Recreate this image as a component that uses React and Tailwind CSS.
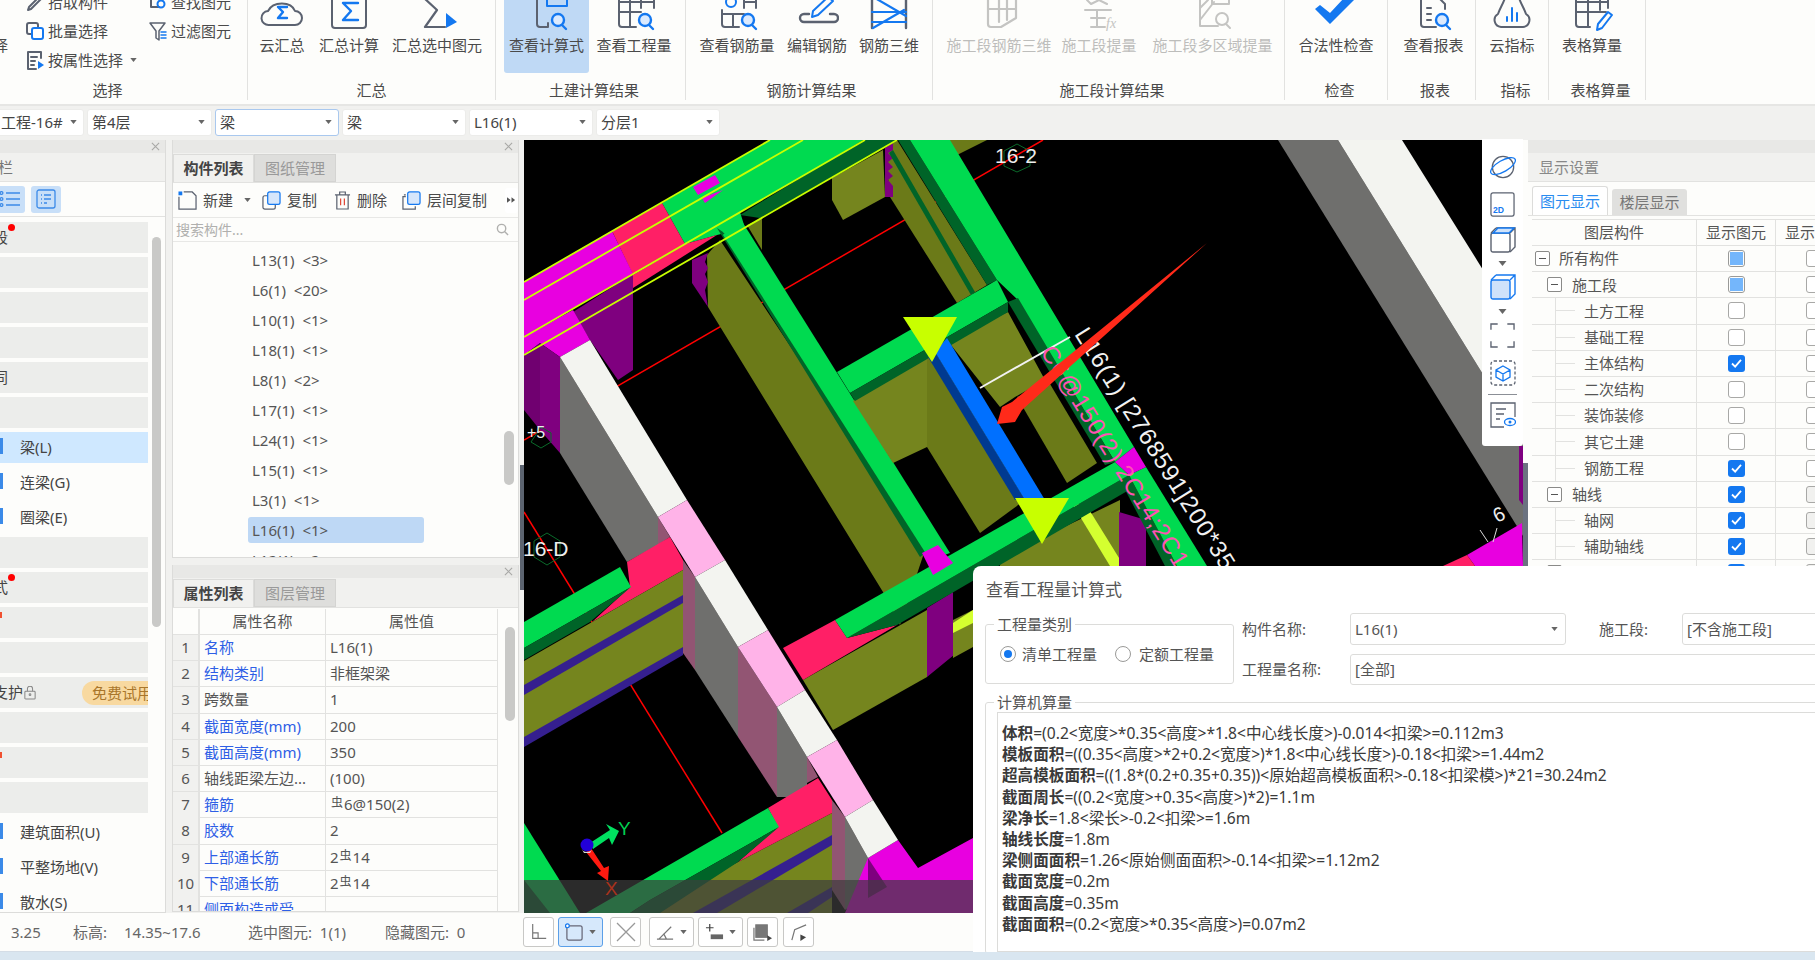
import React from 'react';

const G = '#5b6270';
const B = '#1478f0';
const D = '#c4c4c2';

// 3D view: [fill, points] back to front, page coordinates
const backPolys = [
  ['#6f6f6d', '1278,140 1338,140 1523,439 1523,536'],
  ['#f3f4f0', '1338,140 1402,140 1523,334 1523,439'],
  ['#e800e0', '1467,555 1522,523 1523,566 1475,566'],
  ['#ff1f66', '1443,566 1467,555 1475,566'],
  ['#7f0080', '1519,446 1523,446 1523,505 1519,500'],
  ['#75851e', '832,178 883,150 885,197 843,220 832,200'],
  ['#6b7a18', '947,140 987,140 957,155'],
  ['#6b7a18', '885,150 897,140 987,285 957,303 890,197'],
  ['#7f007f', '885,148 893,143 893,150 888,153 893,158 888,162 893,167 888,171 893,176 888,180 893,186 893,197 885,197'],
  ['#006428', '889,153 893,150 975,292 971,295'],
  ['#006428', '898,140 910,140 997,280 987,285'],
  ['#6b7a18', '747,225 762,218 762,250'],
  ['#6b7a18', '707,255 720,240 925,550 900,625 883,592 708,307'],
  ['#7f007f', '692,260 708,253 705,262 708,268 705,274 708,282 705,290 708,307 692,283'],
  ['#00da50', '662,203 770,140 865,140 685,244'],
  ['#006428', '740,215 863,140 897,140 760,218'],
  ['#00da50', '685,244 740,212 745,228 717,235'],
  ['#ff1f66', '612,231 662,203 685,244 633,275'],
  ['#ff1f66', '633,275 685,244 717,235 633,288'],
  ['#e800e0', '524,282 612,231 633,274 524,337'],
  ['#7f007f', '573,312 633,274 633,370 618,380 590,340'],
  ['#e800e0', '524,337 573,310 590,340 560,357 540,343 524,355'],
  ['#700070', '524,355 540,343 540,430 524,410'],
  ['#7f007f', '540,343 560,357 560,453 540,430'],
  ['#e800e0', '693,187 715,175 720,183 698,195'],
  ['#e800e0', '702,198 723,190 705,203'],
];

const midPolys = [
  ['#006428', '717,228 723,232 930,550 920,557'],
  ['#00da50', '723,235 738,215 950,553 930,560'],
  ['#75851e', '853,401 927,358 927,447 893,463'],
  ['#6b7a18', '927,358 935,352 1025,500 980,533 927,447'],
  ['#75851e', '947,340 1008,312 1045,380 1015,397 1000,407'],
  ['#6b7a18', '1017,397 1050,384 1097,463 1067,483'],
  ['#00da50', '837,372 997,280 1008,302 850,393'],
  ['#006428', '850,393 1008,302 1008,312 855,401'],
  ['#00da50', '910,140 950,140 1134,447 1115,462 1018,300 997,280'],
  ['#006428', '1008,302 1018,298 1115,462 1105,465'],
  ['#003a90', '928,357 935,352 1025,500 1015,500'],
  ['#0070ff', '935,352 947,338 1045,500 1025,500'],
  ['#75851e', '1000,558 1120,500 1120,566 1000,566'],
  ['#d4ff30', '1073,505 1085,503 1124,566 1110,566'],
  ['#7f007f', '1119,512 1146,520 1146,566 1119,566'],
  ['#006428', '1120,480 1129,475 1177,566 1165,566'],
  ['#00da50', '1129,475 1146,467 1207,566 1177,566'],
  ['#75851e', '803,680 927,610 927,677 833,730'],
  ['#7f007f', '927,608 953,592 953,640 960,650 927,677'],
  ['#75851e', '953,620 973,610 973,647 953,658'],
  ['#d4ff30', '953,623 973,610 973,623 953,633'],
  ['#ff1f66', '783,648 835,620 847,638 897,625 803,680'],
  ['#006428', '847,638 897,625 1129,490 1129,475'],
  ['#00da50', '835,620 1115,462 1129,475 847,638'],
  ['#e800e0', '1115,462 1134,447 1146,467 1129,475'],
  ['#e800e0', '922,553 938,545 953,563 933,575'],
];

const wallPolys = [
  ['#6f6f6d', '560,357 658,517 658,545 627,562 560,453'],
  ['#925573', '658,517 670,537 658,545'],
  ['#ff1f66', '627,562 670,537 683,560 683,570 592,622 630,587'],
  ['#00da50', '524,622 620,567 631,587 524,648'],
  ['#006428', '524,648 631,587 590,622 524,660'],
  ['#75851e', '524,661 683,570 683,650 524,740'],
  ['#351f8f', '524,685 683,595 683,603 524,695'],
  ['#351f8f', '524,737 683,647 683,655 524,747'],
  ['#925573', '683,560 695,577 695,670 683,653'],
  ['#6f6f6d', '695,577 738,647 738,737 695,670'],
  ['#925573', '738,647 777,707 777,797 738,737'],
  ['#6f6f6d', '777,707 807,757 807,797 777,797'],
  ['#925573', '807,757 818,777 807,783'],
  ['#75851e', '738,862 832,813 832,913 640,913'],
  ['#351f8f', '693,913 832,835 832,845 717,913'],
  ['#351f8f', '787,913 832,887 832,897 808,913'],
  ['#ff1f66', '768,808 818,778 832,800 832,813 738,862 778,827'],
  ['#00da50', '586,913 768,808 779,827 650,900 630,913'],
  ['#006428', '630,913 650,900 779,827 738,862 660,913'],
  ['#00da50', '524,823 580,913 524,913'],
  ['#006428', '524,880 550,913 524,913'],
  ['#925573', '832,800 845,817 845,910 832,890'],
  ['#6f6f6d', '845,817 868,858 868,893 845,910'],
  ['#e800e0', '868,858 898,840 918,868 973,838 973,913 845,913'],
  ['#7f007f', '868,858 887,887 868,898'],
  ['#f3f4f0', '560,357 590,340 687,500 658,517'],
  ['#ffb3e8', '658,517 687,500 725,560 695,577'],
  ['#f3f4f0', '695,577 725,560 768,630 738,647'],
  ['#ffb3e8', '738,647 768,630 805,690 777,707'],
  ['#f3f4f0', '777,707 805,690 837,740 807,757'],
  ['#ffb3e8', '807,757 837,740 873,800 845,817'],
  ['#f3f4f0', '845,817 873,800 898,840 868,858'],
];

function View3D() {
  return (
    <svg viewBox="524 140 999 773" className="block w-[999px] h-[773px] bg-black">
      <line x1="524" y1="440" x2="1043" y2="140" stroke="#ff0000" strokeWidth="1.5" />
      <line x1="524" y1="512" x2="722" y2="833" stroke="#ff0000" strokeWidth="1.5" />
      {backPolys.map(([c, p]) => <polygon key={p} fill={c} points={p} />)}
      {wallPolys.map(([c, p]) => <polygon key={p} fill={c} points={p} />)}
      {midPolys.map(([c, p]) => <polygon key={p} fill={c} points={p} />)}
      {[[524, 282, 770, 140], [524, 300, 803, 140], [524, 337, 865, 140], [524, 355, 897, 140]].map((l) => (
        <line key={l[1]} x1={l[0]} y1={l[1]} x2={l[2]} y2={l[3]} stroke="#c8ff00" strokeWidth="1.8" />
      ))}
      <polygon fill="#c8ff00" points="903,317 957,317 932,362" />
      <polygon fill="#c8ff00" points="1015,498 1069,498 1042,544" />

      <line x1="980" y1="388" x2="1070" y2="337" stroke="#f2f2f2" strokeWidth="2" />

      <polygon points="1017,144 1030,151 1030,166 1017,172 1004,166 1004,151" fill="none" stroke="#0a6a2a" />
      <polygon points="547,533 560,541 560,557 547,565 534,557 534,541" fill="none" stroke="#0a6a2a" />
      <polygon points="541,427 551,433 551,442 541,448 531,442" fill="none" stroke="#0a6a2a" />
      <text x="995" y="163" fill="#eee" fontSize="21" fontFamily="Liberation Sans">16-2</text>
      <text x="523" y="556" fill="#eee" fontSize="21" fontFamily="Liberation Sans">16-D</text>
      <text x="527" y="438" fill="#eee" fontSize="16" fontFamily="Liberation Sans">+5</text>
      <text x="1494" y="520" fill="#eee" fontSize="20" fontFamily="Liberation Sans" transform="rotate(-25 1502 515)">6</text>
      <path d="M1480 530l8 12M1497 528l-4 14" stroke="#ddd" />
      <text transform="translate(1074 334) rotate(58)" fill="#f2f2f2" fontSize="24" letterSpacing="1" fontFamily="Liberation Sans">L16(1) [2768591]200*350</text>
      <text transform="translate(1040 352) rotate(58)" fill="#ff52b4" fontSize="24" letterSpacing="1" fontFamily="Liberation Sans">C6@150(2) 2C14;2C14</text>

      <polygon points="1207,243 1022,410 1015,422 997,424 1002,407 1012,402" fill="#ff2a1a" />

      <rect x="524" y="880" width="449" height="33" fill="#3d3d3d" fillOpacity="0.7" />

      <polygon points="590,843 610,830 606,824 619,831 612,845 609,838 593,849" fill="#00e060" />
      <polygon points="586,852 591,848 604,868 609,866 608,881 597,873 601,871" fill="#ff1a10" />
      <circle cx="587" cy="845" r="6.5" fill="#2200d8" />
      <path d="M581 848a6.5 6.5 0 0 0 12 0l-3 5h-6z" fill="#d8d8d8" />
      <text x="618" y="835" fill="#00d050" fontSize="19" fontFamily="Liberation Sans">Y</text>
      <text x="605" y="895" fill="#a8321c" fontSize="19" fontFamily="Liberation Sans">X</text>
    </svg>
  );
}

function Caret({ className = '' }) {
  return (
    <svg viewBox="0 0 8 5" className={`w-[7px] h-[4px] shrink-0 ${className}`}>
      <path d="M0 0h8L4 5z" fill="#666" />
    </svg>
  );
}

function Ico({ children, w = 44, h = 35, vb }) {
  return (
    <svg viewBox={vb || `0 0 ${w} ${h}`} width={w} height={h} fill="none" strokeWidth="2" strokeLinejoin="round" strokeLinecap="round">
      {children}
    </svg>
  );
}

const bigIcons = {
  cloudSum: <Ico><path d="M9 25a7 7 0 0 1-1-14C13 1 31 1 35 11a7 7 0 0 1 0 14z" stroke={G} /><path d="M27 7H18l5 5-5 6h9" stroke={B} strokeWidth="2.4" /></Ico>,
  boxSum: <Ico><rect x="7" y="-8" width="34" height="36" rx="3" stroke={G} transform="translate(-2 0)" /><path d="M31 3H16l8 8-8 9h15" stroke={B} strokeWidth="2.4" /></Ico>,
  sumPick: <Ico><path d="M9 -2l13 12-12 17h20" stroke={G} strokeWidth="2.2" /><path d="M31 13l11 9-11 6z" fill={B} /></Ico>,
  formula: <Ico><path d="M12 -2v26a3 3 0 0 0 3 3h8v-4" stroke={G} /><rect x="22" y="-4" width="20" height="10" stroke={B} /><circle cx="33" cy="20" r="6" stroke={B} strokeWidth="2.4" fill="#dbeafe" /><path d="M37 25l4 4" stroke={B} strokeWidth="2.4" /></Ico>,
  tableQ: <Ico><path d="M7 0v24a3 3 0 0 0 3 3h14M7 12h22M18 0v26M29 0v8M42 0v8" stroke={G} /><path d="M7 2h35" stroke={G} /><circle cx="33" cy="20" r="6" stroke={B} strokeWidth="2.4" fill="#dbeafe" /><path d="M37 25l4 4" stroke={B} strokeWidth="2.4" /></Ico>,
  rebarQ: <Ico><path d="M7 10v14a3 3 0 0 0 3 3h14M7 14h22M18 14v12M29 0v8M41 0v8M29 2h12" stroke={G} /><circle cx="16" cy="2" r="5" stroke={B} /><circle cx="33" cy="20" r="6" stroke={B} strokeWidth="2.4" fill="#dbeafe" /><path d="M37 25l4 4" stroke={B} strokeWidth="2.4" /></Ico>,
  edit: <Ico><path d="M14 14h-5a4 4 0 0 0 0 8h30a4 4 0 0 0 0-8h-4" stroke={G} strokeWidth="2.4" /><path d="M33 -3l5 4-15 14-6 2 1-6z" stroke={B} /></Ico>,
  ladder: <Ico><path d="M5 0v28M39 0v28" stroke={G} strokeWidth="2.4" /><path d="M5 12h34M5 22h34M8 -2l31 18M6 28l31-18" stroke={B} strokeWidth="2.2" /></Ico>,
  d3: <Ico><path d="M11 0v24a3 3 0 0 0 3 3h10l15-9V0M11 9h28M22 0v22M30 0v20" stroke={D} strokeWidth="2.2" /></Ico>,
  dfx: <Ico><path d="M10 0l4 4 8-4 8 4M8 10h26M20 10v17M14 27h14M14 18h14" stroke={D} strokeWidth="2" /><text x="29" y="28" fontSize="14" fill={D} stroke="none" fontStyle="italic" fontFamily="Liberation Serif">fx</text></Ico>,
  dq: <Ico><path d="M9 0v26h18M9 20l14-18M9 8l8-8" stroke={D} /><rect x="21" y="-4" width="17" height="8" stroke={D} /><circle cx="31" cy="19" r="6" stroke={D} /><path d="M35 24l4 4" stroke={D} /></Ico>,
  check: <Ico><polygon points="1,9 6,5 16,13 30,-2 42,-2 16,24" fill={B} /></Ico>,
  report: <Ico><path d="M24 27H12a3 3 0 0 1-3-3V-2h18l6 6v5" stroke={G} /><path d="M15 8h4M15 14h4M15 20h4" stroke={G} /><circle cx="30" cy="20" r="6" stroke={B} strokeWidth="2.4" fill="#dbeafe" /><path d="M34 25l4 4" stroke={B} strokeWidth="2.4" /></Ico>,
  cloudBar: <Ico><path d="M11 27a7 7 0 0 1-3-13C10 8 13 4 15 -2h14c2 6 5 10 7 16a7 7 0 0 1-3 13z" stroke={G} /><path d="M17 21v-4M22 21V8M27 21v-8" stroke={B} strokeWidth="2" /></Ico>,
  tablePen: <Ico><path d="M6 0v24a3 3 0 0 0 3 3h11M6 12h30M18 0v26M30 0v10M6 2h32M38 0v8" stroke={G} /><path d="M38 12l4 3-10 13-5 2 1-6z" stroke={B} /></Ico>,
};

function BigButton({ label, icon, w, active, disabled }) {
  return (
    <div className={`flex flex-col items-center shrink-0 h-[73px] rounded-b-[3px] ${w} ${active ? 'bg-[#bfd9f5]' : ''}`}>
      <div className="h-[35px] overflow-hidden">{bigIcons[icon]}</div>
      <span className={`leading-[20px] whitespace-nowrap ${disabled ? 'text-[#bdbdbb]' : 'text-[#4a4a4a]'}`}>{label}</span>
    </div>
  );
}

function Group({ label, w, children, className = '', labelClass = '' }) {
  return (
    <div className={`flex flex-col shrink-0 h-[100px] border-r border-[#e2e2e0] ${w}`}>
      <div className={`flex h-[73px] ${className}`}>{children}</div>
      <div className={`text-center pt-[7px] leading-[20px] text-[#4a4a4a] ${labelClass}`}>{label}</div>
    </div>
  );
}

function SmallTool({ label, icon, caret, className = '' }) {
  return (
    <div className={`flex items-center h-[26px] whitespace-nowrap ${className}`}>
      <span className="w-[24px] mr-[1px] flex justify-center">{icon}</span>
      <span>{label}</span>
      {caret && <Caret className="ml-[7px]" />}
    </div>
  );
}

function Ribbon() {
  const s = { w: 20, h: 20 };
  return (
    <div className="flex h-[106px] bg-[#fdfdfb] border-b-2 border-[#e6e6e4] overflow-hidden text-[15px]">
      <Group label="选择" w="w-[248px]" className="relative" labelClass="pr-[32px]">
        <div className="w-[22px] -ml-[7px] pt-[35px] leading-[20px] text-[#4a4a4a] shrink-0">择</div>
        <div className="flex flex-col -mt-[11px] ml-[8px] text-[#4a4a4a] w-[123px] gap-[3px]">
          <SmallTool label="拾取构件" icon={<Ico {...s}><path d="M3 18l3-1 12-12-2-2L4 15z" stroke={G} /></Ico>} />
          <SmallTool label="批量选择" icon={<Ico {...s}><rect x="2" y="2" width="11" height="11" rx="2" stroke={G} /><rect x="7" y="7" width="11" height="11" rx="2" stroke={B} fill="#fff" /></Ico>} />
          <SmallTool label="按属性选择" caret icon={<Ico {...s}><path d="M16 8V2H3v17h8M6 7h6M6 11h4M6 15h3" stroke={G} /><path d="M13 11l6 4-6 4z" fill={B} /></Ico>} />
        </div>
        <div className="flex flex-col -mt-[11px] text-[#4a4a4a] gap-[3px]">
          <SmallTool label="查找图元" icon={<Ico {...s}><path d="M3 2v13h8M3 6h11" stroke={G} /><circle cx="13" cy="12" r="3.5" stroke={B} /></Ico>} />
          <SmallTool label="过滤图元" icon={<Ico {...s}><path d="M2 2h15l-6 8v9l-3-2v-7z" stroke={G} strokeWidth="1.5" /><path d="M13 11h5M13 14h5M13 17h5" stroke={B} strokeWidth="1.5" /></Ico>} />
        </div>
      </Group>
      <Group label="汇总" w="w-[248px]">
        <BigButton label="云汇总" icon="cloudSum" w="w-[68px]" />
        <BigButton label="汇总计算" icon="boxSum" w="w-[66px]" />
        <BigButton label="汇总选中图元" icon="sumPick" w="w-[110px]" />
      </Group>
      <Group label="土建计算结果" w="w-[190px]" className="pl-[8px]" labelClass="pl-[7px]">
        <BigButton label="查看计算式" icon="formula" w="w-[85px]" active />
        <BigButton label="查看工程量" icon="tableQ" w="w-[90px]" />
      </Group>
      <Group label="钢筋计算结果" w="w-[247px]" className="pl-[11px]" labelClass="pl-[5px]">
        <BigButton label="查看钢筋量" icon="rebarQ" w="w-[80px]" />
        <BigButton label="编辑钢筋" icon="edit" w="w-[80px]" />
        <BigButton label="钢筋三维" icon="ladder" w="w-[64px]" />
      </Group>
      <Group label="施工段计算结果" w="w-[352px]" className="pl-[11px]" labelClass="pl-[7px]">
        <BigButton label="施工段钢筋三维" icon="d3" w="w-[110px]" disabled />
        <BigButton label="施工段提量" icon="dfx" w="w-[90px]" disabled />
        <BigButton label="施工段多区域提量" icon="dq" w="w-[137px]" disabled />
      </Group>
      <Group label="检查" w="w-[103px]" className="justify-center" labelClass="pl-[7px]"><BigButton label="合法性检查" icon="check" w="w-[90px]" /></Group>
      <Group label="报表" w="w-[88px]" className="justify-center pl-[4px]" labelClass="pl-[7px]"><BigButton label="查看报表" icon="report" w="w-[70px]" /></Group>
      <Group label="指标" w="w-[73px]" className="justify-center" labelClass="pl-[7px]"><BigButton label="云指标" icon="cloudBar" w="w-[60px]" /></Group>
      <Group label="表格算量" w="w-[97px]" className="pl-[13px]" labelClass="pl-[7px]"><BigButton label="表格算量" icon="tablePen" w="w-[60px]" /></Group>
    </div>
  );
}

function SelectBox({ label, w, focus }) {
  return (
    <div className={`flex items-center justify-between h-[27px] pl-[4px] pr-[6px] rounded-[3px] bg-white border ${w} ${focus ? 'border-[#a9c8ee]' : 'border-[#ececea]'}`}>
      <span className="truncate">{label}</span>
      <Caret />
    </div>
  );
}

function SelectBar() {
  return (
    <div className="flex items-center gap-[3px] h-[32px] bg-[#f1f1ef] text-[15px] text-[#444] -ml-[40px]">
      <SelectBox label="工程-16#" w="w-[124px] pl-[40px]" />
      <SelectBox label="第4层" w="w-[125px]" />
      <SelectBox label="梁" w="w-[124px]" focus />
      <SelectBox label="梁" w="w-[124px]" />
      <SelectBox label="L16(1)" w="w-[124px]" />
      <SelectBox label="分层1" w="w-[124px]" />
    </div>
  );
}

function TitleBar() {
  return (
    <div className="flex items-center justify-end h-[13px] pr-[5px] bg-[#e8e8e6] text-[#a8a8a6] shrink-0">
      <svg viewBox="0 0 10 10" className="w-[9px] h-[9px]"><path d="M1 1l8 8M9 1l-8 8" stroke="#a8a8a6" strokeWidth="1.2" /></svg>
    </div>
  );
}

// left module column; the list is scrolled sideways, only the ends of the names show
const leftRows = [
  { k: 1, text: '段', dot: true }, { k: 2 }, { k: 3 }, { k: 4 }, { k: 5, text: '同' }, { k: 6 },
  { k: 7, name: '梁(L)', sel: true }, { k: 8, name: '连梁(G)' }, { k: 9, name: '圈梁(E)' }, { k: 10 },
  { k: 11, text: '式', dot: true }, { k: 12, red: true }, { k: 13 }, { k: 14, text: '支护', lock: true, badge: true },
  { k: 15 }, { k: 16, red: true }, { k: 17 },
  { k: 18, name: '建筑面积(U)' }, { k: 19, name: '平整场地(V)' }, { k: 20, name: '散水(S)' },
];

function LeftPanel() {
  return (
    <div className="w-[166px] h-full shrink-0 flex flex-col bg-[#fdfdfb] border-r border-b border-[#dcdcda] overflow-hidden text-[15px] text-[#444]">
      <TitleBar />
      <div className="h-[29px] bg-[#f1f1ef] border-b border-[#e2e2e0] flex items-center text-[#777] shrink-0"><span className="-ml-[2px]">栏</span></div>
      <div className="h-[35px] flex items-center gap-[6px] border-b border-[#e2e2e0] shrink-0">
        <div className="w-[25px] h-[27px] bg-[#c8dff8] rounded-r-[3px] flex items-center justify-end pr-[5px]">
          <svg viewBox="0 0 20 16" className="w-[20px] h-[16px]" fill="none" stroke="#3b8ae8" strokeWidth="1.3"><path d="M6 2h14M6 8h14M6 14h14" /><circle cx="1.5" cy="2" r="1.4" /><circle cx="1.5" cy="8" r="1.4" /><circle cx="1.5" cy="14" r="1.4" /></svg>
        </div>
        <div className="w-[30px] h-[27px] bg-[#c8dff8] rounded-[3px] flex items-center justify-center">
          <svg viewBox="0 0 20 20" className="w-[20px] h-[20px]" fill="none" stroke="#3b8ae8" strokeWidth="1.3"><rect x="1" y="1" width="18" height="18" rx="2" /><path d="M5 6h1M8 6h7M5 10h1M8 10h7M5 14h1M8 14h3" /></svg>
        </div>
      </div>
      <div className="flex flex-1 min-h-0 pt-[5px]">
        <div className="w-[148px] flex flex-col gap-[4px] shrink-0">
          {leftRows.map((r) => (
            <div key={r.k} className={`relative h-[31px] shrink-0 flex items-center ${r.sel ? 'bg-[#cfe8ff]' : r.name ? '' : 'bg-[#ecedeb]'}`}>
              {r.name && <span className="absolute left-0 top-[6px] w-[3px] h-[16px] bg-[#3b8ae8]" />}
              {r.name && <span className="pl-[20px] whitespace-nowrap">{r.name}</span>}
              {r.text && <span className="-ml-[7px] whitespace-nowrap">{r.text}</span>}
              {r.lock && (
                <svg viewBox="0 0 14 16" className="w-[12px] h-[14px] ml-[1px]" fill="none" stroke="#888" strokeWidth="1.2"><rect x="1" y="6" width="12" height="9" rx="1" /><path d="M4 6V3a3 3 0 0 1 6 0v3" /><circle cx="7" cy="10" r="1" /></svg>
              )}
              {r.badge && <span className="absolute right-0 top-[4px] h-[24px] w-[66px] pl-[10px] rounded-l-full bg-[#f8d9a0] text-[#a9762b] leading-[24px] whitespace-nowrap overflow-hidden">免费试用</span>}
              {r.dot && <span className="absolute left-[8px] top-[2px] w-[7px] h-[7px] rounded-full bg-[#ff0000]" />}
              {r.red && <span className="absolute left-0 top-[5px] w-[2px] h-[6px] bg-[#f05030]" />}
            </div>
          ))}
        </div>
        <div className="ml-[4px] mt-[15px] w-[9px] h-[390px] rounded-full bg-[#c9c9c7] shrink-0" />
      </div>
    </div>
  );
}

function Tabs({ a, b }) {
  return (
    <div className="flex items-end h-[30px] bg-[#f1f1ef] border-b border-[#e2e2e0] shrink-0">
      <div className="w-[81px] h-[28px] flex items-center justify-center font-bold text-[#444] bg-[#f1f1ef] border border-[#dcdcda] border-b-0">{a}</div>
      <div className="w-[82px] h-[28px] flex items-center justify-center text-[#999] bg-[#dededc] border border-[#d4d4d2]">{b}</div>
    </div>
  );
}

const comps = ['L13(1)  <3>', 'L6(1)  <20>', 'L10(1)  <1>', 'L18(1)  <1>', 'L8(1)  <2>', 'L17(1)  <1>', 'L24(1)  <1>', 'L15(1)  <1>', 'L3(1)  <1>', 'L16(1)  <1>', 'L12(1)  <2>'];

function ListPanel() {
  return (
    <div className="h-[418px] shrink-0 flex flex-col bg-[#fdfdfb] border border-t-0 border-[#dcdcda] overflow-hidden text-[15px] text-[#555]">
      <TitleBar />
      <Tabs a="构件列表" b="图纸管理" />
      <div className="flex items-center h-[35px] pl-[5px] border-b border-[#e8e8e6] shrink-0 whitespace-nowrap text-[#4a4a4a]">
        <svg viewBox="0 0 20 20" className="w-[19px] h-[19px]" fill="none" stroke={G} strokeWidth="1.3"><path d="M6 1h9l4 4v14H1V6" /><rect x="0.5" y="0.5" width="4" height="4" fill={B} stroke="none" /></svg>
        <span className="ml-[6px]">新建</span>
        <Caret className="ml-[11px] mr-[11px]" />
        <svg viewBox="0 0 20 20" className="w-[19px] h-[19px]" fill="none" stroke={G} strokeWidth="1.3"><rect x="1" y="5" width="13" height="14" rx="2" /><rect x="6" y="1" width="13" height="13" rx="2" fill="#d6e6fb" stroke={B} /></svg>
        <span className="ml-[6px]">复制</span>
        <svg viewBox="0 0 18 20" className="w-[17px] h-[19px] ml-[17px]" fill="none" stroke={G} strokeWidth="1.3"><path d="M1 4h16M6 4V1h6v3M3 4v15h12V4" /><path d="M7 8v7M11 8v7" stroke="#e04a3a" /></svg>
        <span className="ml-[6px]">删除</span>
        <svg viewBox="0 0 20 20" className="w-[19px] h-[19px] ml-[15px]" fill="none" stroke={G} strokeWidth="1.3"><path d="M4 6H1v13h13v-3M2 4h2" /><rect x="6" y="1" width="13" height="13" rx="2" fill="#d6e6fb" stroke={B} /></svg>
        <span className="ml-[6px]">层间复制</span>
        <div className="ml-[18px] w-[13px] h-[25px] flex items-center justify-center bg-white rounded-[3px]">
          <svg viewBox="0 0 10 6" className="w-[9px] h-[6px]"><path d="M0 0l4 3-4 3zM5 0l4 3-4 3z" fill="#555" /></svg>
        </div>
      </div>
      <div className="flex items-center justify-between h-[24px] px-[3px] pr-[9px] border-b border-[#e8e8e6] shrink-0 text-[14px] text-[#b0b0ae]">
        <span>搜索构件...</span>
        <svg viewBox="0 0 14 14" className="w-[13px] h-[13px]" fill="none" stroke="#b0b0ae" strokeWidth="1.5"><circle cx="6" cy="6" r="4.5" /><path d="M9.5 9.5L13 13" /></svg>
      </div>
      <div className="flex flex-1 min-h-0">
        <div className="flex-1 pt-[3px]">
          {comps.map((c) => (
            <div key={c} className="h-[30px] py-[2px] pl-[75px]">
              <div className={`w-[176px] h-[26px] pl-[4px] leading-[26px] whitespace-pre rounded-[3px] ${c.startsWith('L16') ? 'bg-[#bed8f5]' : ''}`}>{c}</div>
            </div>
          ))}
        </div>
        <div className="w-[10px] h-[54px] mt-[189px] mr-[4px] rounded-full bg-[#c9c9c7]" />
      </div>
    </div>
  );
}

// rebar grade mark, a small raised glyph in the value column
function Steel() {
  return <span className="text-[12px] relative -top-[3px] mx-[1px]">虫</span>;
}

const props = [
  ['名称', 'L16(1)', true], ['结构类别', '非框架梁', true], ['跨数量', '1'], ['截面宽度(mm)', '200', true], ['截面高度(mm)', '350', true],
  ['轴线距梁左边...', '(100)'], ['箍筋', <><Steel />6@150(2)</>, true], ['胶数', '2', true], ['上部通长筋', <>2<Steel />14</>, true], ['下部通长筋', <>2<Steel />14</>, true], ['侧面构造或受', '', true],
];

function PropPanel() {
  return (
    <div className="flex-1 min-h-0 flex flex-col bg-[#fdfdfb] border border-t-0 border-[#dcdcda] overflow-hidden text-[15px] text-[#555]">
      <TitleBar />
      <Tabs a="属性列表" b="图层管理" />
      <div className="flex flex-1 min-h-0 pt-[1px]">
        <div className="w-[325px] shrink-0">
          <div className="grid grid-cols-[27px_126px_172px] h-[26px] border-b border-[#e2e2e0] text-center leading-[25px]">
            <div className="bg-[#fdfdfb] border-r-2 border-[#e2e2e0]" />
            <div className="border-r border-[#e2e2e0]">属性名称</div>
            <div className="border-r border-[#e2e2e0]">属性值</div>
          </div>
          {props.map(([n, v, link], i) => (
            <div key={n} className="grid grid-cols-[27px_126px_172px] h-[26.2px] border-b border-[#e2e2e0] leading-[25px]">
              <div className="bg-[#f1f1ef] border-r-2 border-[#e2e2e0] text-center">{i + 1}</div>
              <div className={`pl-[4px] border-r border-[#e2e2e0] whitespace-nowrap overflow-hidden ${link ? 'text-[#2e5fe6]' : ''}`}>{n}</div>
              <div className="pl-[4px] border-r border-[#e2e2e0] whitespace-nowrap">{v}</div>
            </div>
          ))}
        </div>
        <div className="w-[10px] h-[94px] mt-[18px] ml-[7px] rounded-full bg-[#c9c9c7]" />
      </div>
    </div>
  );
}

function ViewTools() {
  return (
    <div className="absolute left-[958px] -top-[1px] w-[41px] h-[307px] bg-white rounded-b-[3px] flex flex-col items-center pt-[15px]">
      <svg viewBox="0 0 28 28" className="w-[26px] h-[26px]" fill="none" strokeWidth="1.4"><circle cx="14" cy="14" r="11.5" stroke={G} /><ellipse cx="14" cy="13" rx="15" ry="6" transform="rotate(-30 14 13)" stroke={B} /></svg>
      <svg viewBox="0 0 26 26" className="w-[25px] h-[25px] mt-[12px]" fill="none"><rect x="1" y="1" width="24" height="24" rx="2" stroke={G} strokeWidth="1.3" /><text x="3" y="22" fontSize="9" fontWeight="bold" fill={B} fontFamily="Liberation Sans">2D</text></svg>
      <svg viewBox="0 0 26 26" className="w-[26px] h-[26px] mt-[10px]" fill="none" stroke={G} strokeWidth="1.4"><rect x="1" y="6" width="19" height="19" rx="2" /><path d="M6 1h19v19l-5 5M1 6l5-5M20 6l5-5" /><path d="M3 6l5-5h16l-5 5z" fill="#cfe2fa" stroke={B} /></svg>
      <Caret className="mt-[8px] !w-[9px] !h-[5px]" />
      <svg viewBox="0 0 26 26" className="w-[26px] h-[26px] mt-[8px]" fill="none" stroke={B} strokeWidth="1.4"><rect x="1" y="6" width="19" height="19" rx="2" fill="#cfe2fa" /><path d="M6 1h19v19l-5 5M1 6l5-5M20 6l5-5" /></svg>
      <Caret className="mt-[9px] !w-[9px] !h-[5px]" />
      <svg viewBox="0 0 26 26" className="w-[25px] h-[25px] mt-[9px]" fill="none" stroke={G} strokeWidth="1.4"><path d="M1 7V1h7M18 1h7v6M25 19v6h-7M8 25H1v-6" /></svg>
      <svg viewBox="0 0 26 26" className="w-[26px] h-[26px] mt-[12px]" fill="none" strokeWidth="1.3"><rect x="1" y="1" width="24" height="24" rx="3" stroke={G} strokeDasharray="3 2" /><path d="M13 6l7 4v7l-7 4-7-4v-7zM6 10l7 4 7-4M13 14v7" stroke={B} /></svg>
      <div className="w-[29px] h-[1px] bg-[#8b8f96] mt-[8px]" />
      <svg viewBox="0 0 26 26" className="w-[26px] h-[26px] mt-[7px]" fill="none" stroke={G} strokeWidth="1.3"><path d="M14 25H1V1h24v14M6 7h10M6 12h8M6 17h4" /><ellipse cx="20" cy="20" rx="5.5" ry="3.5" stroke={B} fill="#fff" /><circle cx="20" cy="20" r="1.5" fill={B} stroke="none" /></svg>
    </div>
  );
}

const layers = [
  ['所有构件', 0, 'half', 'off'], ['施工段', 1, 'half', 'off'], ['土方工程', 2, 'off', 'off'], ['基础工程', 2, 'off', 'off'],
  ['主体结构', 2, 'on', 'off'], ['二次结构', 2, 'off', 'off'], ['装饰装修', 2, 'off', 'off'], ['其它土建', 2, 'off', 'off'],
  ['钢筋工程', 2, 'on', 'off'], ['轴线', 1, 'on', 'dis'], ['轴网', 2, 'on', 'dis'], ['辅助轴线', 2, 'on', 'dis'], ['其它', 1, 'on', 'dis'],
];

function Check({ state }) {
  if (state === 'on') {
    return (
      <span className="w-[17px] h-[17px] rounded-[3px] bg-[#1478f0] flex items-center justify-center shrink-0">
        <svg viewBox="0 0 12 10" className="w-[11px] h-[9px]" fill="none" stroke="#fff" strokeWidth="2"><path d="M1 5l3.5 3.5L11 1" /></svg>
      </span>
    );
  }
  if (state === 'half') {
    return (
      <span className="w-[17px] h-[17px] rounded-[3px] border border-[#9a9a98] flex items-center justify-center shrink-0">
        <span className="w-[13px] h-[13px] bg-[#74b6fb]" />
      </span>
    );
  }
  return <span className={`w-[17px] h-[17px] rounded-[3px] border border-[#a8a8a6] shrink-0 ${state === 'dis' ? 'bg-[#f1f1ef]' : 'bg-white'}`} />;
}

function Expander() {
  return (
    <span className="w-[15px] h-[15px] border border-[#8a8a88] rounded-[2px] flex items-center justify-center shrink-0 bg-white">
      <span className="w-[7px] h-[1px] bg-[#555]" />
    </span>
  );
}

function RightPanel() {
  return (
    <div className="flex-1 min-w-0 flex flex-col bg-[#fdfdfb] overflow-hidden text-[15px] text-[#555]">
      <div className="h-[13px] bg-[#e8e8e6] shrink-0" />
      <div className="h-[29px] pl-[11px] bg-[#f1f1ef] border-b border-[#e2e2e0] leading-[28px] text-[#888] shrink-0">显示设置</div>
      <div className="flex items-end h-[34px] pl-[4px] gap-[4px] border-b border-[#e2e2e0] shrink-0">
        <div className="w-[76px] h-[29px] flex items-center justify-center text-[#2a8cf0] bg-white border border-[#dcdcda] border-b-0 rounded-t-[3px]">图元显示</div>
        <div className="w-[75px] h-[26px] flex items-center justify-center text-[#777] bg-[#e0e0de] rounded-t-[3px]">楼层显示</div>
      </div>
      <div className="mt-[3px] ml-[4px] border-t border-[#e2e2e0]">
        <div className="grid grid-cols-[165px_79px_1fr] h-[26px] border-b border-[#e2e2e0] leading-[25px] text-center">
          <div className="border-r border-[#e2e2e0]">图层构件</div>
          <div className="border-r border-[#e2e2e0]">显示图元</div>
          <div className="text-left pl-[9px] whitespace-nowrap overflow-hidden">显示标注</div>
        </div>
        {layers.map(([n, lvl, a, b]) => (
          <div key={n} className="grid grid-cols-[165px_79px_1fr] h-[26.2px] border-b border-[#e2e2e0]">
            <div className="flex items-center border-r border-[#e2e2e0] whitespace-nowrap">
              {lvl === 0 && <span className="ml-[3px] mr-[9px] flex"><Expander /></span>}
              {lvl === 1 && <span className="ml-[15px] mr-[10px] flex"><Expander /></span>}
              {lvl === 2 && <span className="ml-[23px] w-[20px] mr-[9px] h-full flex items-center border-l border-[#e2e2e0]"><span className="w-full border-t border-[#e2e2e0]" /></span>}
              {n}
            </div>
            <div className="flex items-center justify-center border-r border-[#e2e2e0]"><Check state={a} /></div>
            <div className="flex items-center pl-[30px]"><Check state={b} /></div>
          </div>
        ))}
      </div>
    </div>
  );
}

const formulas = [
  ['体积', '=(0.2<宽度>*0.35<高度>*1.8<中心线长度>)-0.014<扣梁>=0.112m3'],
  ['模板面积', '=((0.35<高度>*2+0.2<宽度>)*1.8<中心线长度>)-0.18<扣梁>=1.44m2'],
  ['超高模板面积', '=((1.8*(0.2+0.35+0.35))<原始超高模板面积>-0.18<扣梁模>)*21=30.24m2'],
  ['截面周长', '=((0.2<宽度>+0.35<高度>)*2)=1.1m'],
  ['梁净长', '=1.8<梁长>-0.2<扣梁>=1.6m'],
  ['轴线长度', '=1.8m'],
  ['梁侧面面积', '=1.26<原始侧面面积>-0.14<扣梁>=1.12m2'],
  ['截面宽度', '=0.2m'],
  ['截面高度', '=0.35m'],
  ['截面面积', '=(0.2<宽度>*0.35<高度>)=0.07m2'],
];

function Dialog() {
  return (
    <div className="absolute left-[973px] top-[566px] w-[842px] h-[386px] bg-white rounded-tl-[8px] text-[15px] text-[#555] overflow-hidden pl-[12px]">
      <div className="h-[48px] pl-[1px] leading-[48px] text-[17px]">查看工程量计算式</div>
      <div className="flex w-[1000px]">
        <fieldset className="w-[249px] h-[68px] mt-[2px] border border-[#dcdcda] rounded-[3px] pl-[8px] shrink-0">
          <legend className="px-[3px] leading-[16px]">工程量类别</legend>
          <div className="flex items-center mt-[11px] pl-[6px]">
            <span className="w-[16px] h-[16px] rounded-full border border-[#9a9a98] flex items-center justify-center mr-[6px]"><span className="w-[8px] h-[8px] rounded-full bg-[#1478f0]" /></span>
            <span>清单工程量</span>
            <span className="w-[16px] h-[16px] rounded-full border border-[#9a9a98] ml-[18px] mr-[8px]" />
            <span>定额工程量</span>
          </div>
        </fieldset>
        <div className="ml-[8px] flex-1 flex flex-col gap-[9px] -mt-[1px]">
          <div className="flex items-center h-[32px]">
            <span className="w-[108px] shrink-0">构件名称:</span>
            <div className="w-[216px] h-[32px] pl-[4px] pr-[7px] flex items-center justify-between border border-[#dcdcda] rounded-[3px]">L16(1)<Caret /></div>
            <span className="ml-[33px] w-[83px] shrink-0">施工段:</span>
            <div className="flex-1 h-[32px] pl-[4px] flex items-center border border-[#dcdcda] rounded-[3px]">[不含施工段]</div>
          </div>
          <div className="flex items-center h-[31px]">
            <span className="w-[108px] shrink-0">工程量名称:</span>
            <div className="flex-1 h-[31px] pl-[4px] flex items-center border border-[#dcdcda] rounded-[3px]">[全部]</div>
          </div>
        </div>
      </div>
      <fieldset className="mt-[9px] h-[260px] w-[900px] border border-[#dcdcda] rounded-[3px] pl-[11px] pt-[2px]">
        <legend className="px-[3px] leading-[16px] -ml-[3px]">计算机算量</legend>
        <div className="h-[240px] border border-[#dcdcda] pl-[4px] pt-[10px] text-[15.6px] text-[#3a3a3a] leading-[21.2px]">
          {formulas.map(([k, v]) => (
            <div key={k} className="whitespace-pre"><b>{k}</b>{v}</div>
          ))}
        </div>
      </fieldset>
    </div>
  );
}

function ToolBtn({ children, w, active }) {
  return (
    <div className={`h-[30px] flex items-center justify-center gap-[5px] rounded-[3px] border shrink-0 ${w} ${active ? 'border-[#5a9fe8] bg-[#d6e8fb]' : 'border-[#c8c8c6] bg-white'}`}>
      {children}
    </div>
  );
}

function StatusBar() {
  const st = { fill: 'none', stroke: '#777', strokeWidth: 1.3 };
  return (
    <div className="flex items-center h-[39px] bg-[#fdfdfb] border-b border-[#d4dde6] text-[15px] text-[#666] whitespace-pre">
      <div className="w-[523px] shrink-0 flex">
        <span className="ml-[11px] w-[62px]">3.25</span>
        <span className="w-[51px]">标高:</span>
        <span className="w-[124px]">14.35~17.6</span>
        <span className="w-[137px]">选中图元:  1(1)</span>
        <span>隐藏图元:  0</span>
      </div>
      <div className="flex">
        <ToolBtn w="w-[31px]"><svg viewBox="0 0 20 20" width="18" height="18" {...st}><path d="M3 1v16h15M3 11h6v6" /></svg></ToolBtn>
        <ToolBtn w="w-[45px] ml-[4px]" active>
          <svg viewBox="0 0 20 20" width="19" height="19" {...st}><rect x="2" y="3" width="16" height="15" rx="2" stroke="#667" /><circle cx="2.5" cy="3" r="2" stroke={B} fill="#fff" /></svg>
          <Caret />
        </ToolBtn>
        <ToolBtn w="w-[31px] ml-[7px]"><svg viewBox="0 0 20 20" width="20" height="20" {...st}><path d="M1 1l18 18M19 1L1 19" stroke="#999" /></svg></ToolBtn>
        <ToolBtn w="w-[45px] ml-[8px]"><svg viewBox="0 0 20 20" width="19" height="19" {...st}><path d="M1 17h17M3 17L16 4M8 11l3 6" /></svg><Caret /></ToolBtn>
        <ToolBtn w="w-[45px] ml-[4px]"><svg viewBox="0 0 20 20" width="19" height="19" {...st}><path d="M1 5h8M5 1v8" stroke="#444" /><rect x="6" y="12" width="13" height="5" fill="#666" stroke="none" /></svg><Caret /></ToolBtn>
        <ToolBtn w="w-[31px] ml-[4px]"><svg viewBox="0 0 20 20" width="19" height="19" {...st}><rect x="3" y="2" width="12" height="13" fill="#777" /><path d="M1 5v13h11" /><path d="M15 13l5 3-5 3z" fill="#444" stroke="none" /></svg></ToolBtn>
        <ToolBtn w="w-[31px] ml-[5px]"><svg viewBox="0 0 20 20" width="19" height="19" {...st}><path d="M3 18l3-11L18 2" /><path d="M12 12l6 3-6 4z" fill="#444" stroke="none" /></svg></ToolBtn>
      </div>
    </div>
  );
}

export default function App() {
  return (
    <div className="relative w-[1815px] h-[960px] overflow-hidden bg-[#f1f1ef] [font-family:'Noto_Sans','Noto_Sans_CJK_SC',sans-serif]">
      <Ribbon />
      <SelectBar />
      <div className="flex h-[773px] mt-[2px]">
        <LeftPanel />
        <div className="w-[6px] shrink-0" />
        <div className="w-[347px] shrink-0 flex flex-col gap-[7px] h-[772px]">
          <ListPanel />
          <PropPanel />
        </div>
        <div className="w-[5px] shrink-0 pl-[1px] pt-[325px]"><div className="h-[125px] bg-[#5c6470]" /></div>
        <div className="relative w-[999px] shrink-0">
          <View3D />
          <ViewTools />
        </div>
        <div className="w-[5px] shrink-0 bg-[#fdfdfb] pt-[323px]"><div className="h-[110px] bg-[#6b7280]" /></div>
        <RightPanel />
      </div>
      <StatusBar />
      <div className="h-[8px] bg-[#d9e6f0]" />
      <Dialog />
    </div>
  );
}
